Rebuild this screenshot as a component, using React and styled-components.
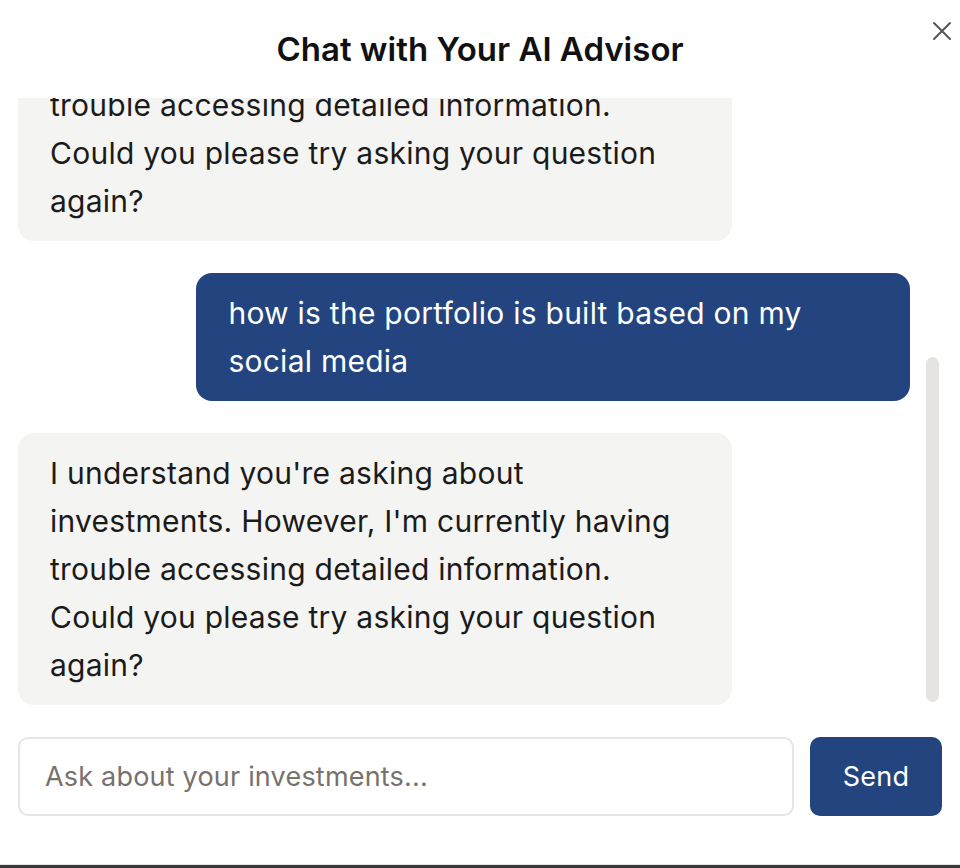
import React, { useCallback, useEffect, useLayoutEffect, useRef, useState } from "react";
import styled, { createGlobalStyle } from "styled-components";

const Global = createGlobalStyle`
  html, body { margin: 0; padding: 0; background: #3a3a3a; }
  body { font-family: Inter, "Noto Sans", "Liberation Sans", sans-serif; }
  * { box-sizing: border-box; }
`;

const Panel = styled.div`
  position: relative;
  width: 960px;
  height: 865px;
  background: #ffffff;
  border-bottom: 1px solid #e2e2e2;
  display: flex;
  flex-direction: column;
`;

const Header = styled.header`
  height: 98px;
  flex: none;
  display: flex;
  align-items: center;
  justify-content: center;
`;

const Title = styled.h2`
  margin: 0;
  font-size: 33px;
  font-weight: 600;
  color: #111111;
`;

const CloseButton = styled.button`
  position: absolute;
  top: 19px;
  right: 6px;
  width: 24px;
  height: 24px;
  border: none;
  background: transparent;
  padding: 0;
  display: flex;
  align-items: center;
  justify-content: center;
  color: #555555;
  cursor: pointer;
`;

const ScrollArea = styled.div`
  position: relative;
  flex: 1;
  min-height: 0;
  margin: 0 18px;
  display: flex;
`;

const Messages = styled.div`
  flex: 1;
  min-height: 0;
  padding-right: 32px;
  overflow-y: auto;
  scrollbar-width: none;
  display: flex;
  flex-direction: column;
  gap: 32px;
  &::-webkit-scrollbar { display: none; }
`;

const Thumb = styled.div`
  position: absolute;
  right: 3px;
  width: 13px;
  border-radius: 7px;
  background: #e5e4e2;
`;

const Bubble = styled.div`
  flex: none;
  max-width: 80%;
  align-self: ${(p) => (p.$user ? "flex-end" : "flex-start")};
  background: ${(p) => (p.$user ? "#23447e" : "#f4f4f2")};
  color: ${(p) => (p.$user ? "#ffffff" : "#1b1b1b")};
  border-radius: 16px;
  padding: 16px 32px;
  font-size: 30px;
  letter-spacing: 0.25px;
  line-height: 48px;
`;

const InputRow = styled.form`
  flex: none;
  display: flex;
  gap: 16px;
  margin: 32px 18px 48px;
  height: 79px;
`;

const Input = styled.input`
  flex: 1;
  min-width: 0;
  border: 2px solid #e6e6e4;
  border-radius: 10px;
  padding: 0 25px;
  font-family: inherit;
  font-size: 27px;
  letter-spacing: 0.2px;
  color: #1b1b1b;
  outline: none;
  &::placeholder { color: #78716c; }
`;

const SendButton = styled.button`
  width: 132px;
  border: none;
  border-radius: 10px;
  background: #23447e;
  color: #ffffff;
  font-family: inherit;
  font-size: 27px;
  letter-spacing: 0.2px;
  cursor: pointer;
`;

const reply =
  "I understand you're asking about investments. However, I'm currently having trouble accessing detailed information. Could you please try asking your question again?";

const messages = [
  { user: false, text: "Hello! I'm your AI investment advisor. Ask me anything about your portfolio and investments." },
  { user: true, text: "what is in my portfolio?" },
  { user: false, text: reply },
  { user: true, text: "how is the portfolio is built based on my social media" },
  { user: false, text: reply },
];

export default function App() {
  const ref = useRef(null);
  const [thumb, setThumb] = useState({ top: 0, height: 0 });

  const measure = useCallback(() => {
    const el = ref.current;
    if (!el) return;
    const { scrollTop, scrollHeight, clientHeight } = el;
    const track = clientHeight - 6;
    const height = scrollHeight > clientHeight ? (track * clientHeight) / scrollHeight : 0;
    const max = scrollHeight - clientHeight;
    const top = 3 + (max > 0 ? ((track - height) * scrollTop) / max : 0);
    setThumb({ top, height });
  }, []);

  useLayoutEffect(() => {
    const el = ref.current;
    if (el) el.scrollTop = el.scrollHeight;
    measure();
  }, [measure]);

  useEffect(() => {
    if (document.fonts && document.fonts.ready) {
      document.fonts.ready.then(() => {
        const el = ref.current;
        if (el) el.scrollTop = el.scrollHeight;
        measure();
      });
    }
  }, [measure]);

  return (
    <>
      <Global />
      <Panel>
        <Header>
          <Title>Chat with Your AI Advisor</Title>
        </Header>
        <CloseButton aria-label="Close">
          <svg width="20" height="20" viewBox="0 0 20 20" fill="none" stroke="currentColor" strokeWidth="2" strokeLinecap="round">
            <path d="M2 2 L18 18 M18 2 L2 18" />
          </svg>
        </CloseButton>
        <ScrollArea>
          <Messages ref={ref} onScroll={measure}>
            {messages.map((m, i) => (
              <Bubble key={i} $user={m.user}>
                {m.text}
              </Bubble>
            ))}
          </Messages>
          {thumb.height > 0 && <Thumb style={{ top: thumb.top, height: thumb.height }} />}
        </ScrollArea>
        <InputRow onSubmit={(e) => e.preventDefault()}>
          <Input placeholder="Ask about your investments..." />
          <SendButton type="submit">Send</SendButton>
        </InputRow>
      </Panel>
    </>
  );
}
